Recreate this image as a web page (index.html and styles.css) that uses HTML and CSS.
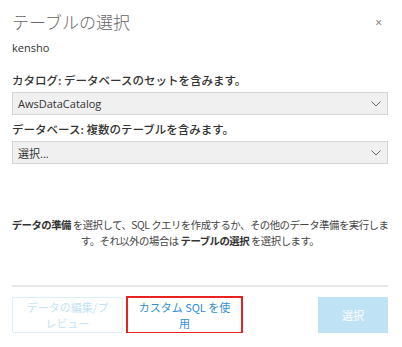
FILE: index.html
```html
<!DOCTYPE html>
<html lang="ja">
<head>
  <meta charset="UTF-8" />
  <title>テーブルの選択</title>
  <link rel="stylesheet" href="styles.css">
</head>
<body>

<div class="dialog">
  <div class="dialog-header">
    <h1>テーブルの選択</h1>
    <span class="close">×</span>
  </div>
  <div class="source-name">kensho</div>

  <label class="field-label">カタログ: データベースのセットを含みます。</label>
  <div class="select-box">
    <span>AwsDataCatalog</span>
    <svg class="chevron" width="10" height="6" viewBox="0 0 10 6"><path d="M0.5 0.5 L5 5 L9.5 0.5" fill="none" stroke="#666" stroke-width="1"/></svg>
  </div>

  <label class="field-label second">データベース: 複数のテーブルを含みます。</label>
  <div class="select-box">
    <span>選択...</span>
    <svg class="chevron" width="10" height="6" viewBox="0 0 10 6"><path d="M0.5 0.5 L5 5 L9.5 0.5" fill="none" stroke="#666" stroke-width="1"/></svg>
  </div>

  <p class="hint"><b>データの準備</b> を選択して、SQL クエリを作成するか、その他のデータ準備を実行しま<br>す。それ以外の場合は <b>テーブルの選択</b> を選択します。</p>

  <div class="divider"></div>

  <div class="actions">
    <button class="btn btn-outline disabled">データの編集/プ<br>レビュー</button>
    <button class="btn btn-outline highlighted">カスタム SQL を使<br>用</button>
    <button class="btn btn-primary">選択</button>
  </div>
</div>

</body>
</html>
```

FILE: styles.css
```css
body {
  margin: 0;
  background: #fff;
  font-family: "Open Sans", "Noto Sans CJK JP", sans-serif;
  color: #333;
}

.dialog {
  padding: 10px 14px 0 12px;
}

.dialog-header {
  display: flex;
  justify-content: space-between;
  align-items: center;
}

.dialog-header h1 {
  margin: 0;
  font-family: "Noto Sans CJK JP", sans-serif;
  font-size: 17px;
  font-weight: 300;
  line-height: 24px;
  color: #666;
}

.close {
  font-size: 12px;
  color: #777;
  margin-right: 6px;
}

.source-name {
  font-size: 11px;
  line-height: 16px;
  margin-top: 6px;
}

.field-label {
  display: block;
  font-family: "Noto Sans CJK JP", sans-serif;
  font-size: 11.5px;
  font-weight: 500;
  line-height: 16px;
  margin-top: 16px;
  color: #333;
}

.field-label.second {
  margin-top: 6px;
}

.select-box {
  display: flex;
  justify-content: space-between;
  align-items: center;
  height: 21px;
  margin-top: 4px;
  padding: 0 6px 0 5px;
  background: #f0f0f0;
  border: 1px solid #d5d5d5;
  font-size: 11px;
  color: #333;
}

.hint {
  margin: 53px -4px 0;
  font-family: "Noto Sans CJK JP", sans-serif;
  font-size: 10.4px;
  letter-spacing: -0.5px;
  line-height: 16px;
  text-align: center;
  white-space: nowrap;
  color: #444;
}

.hint b {
  font-weight: 700;
  color: #333;
}

.divider {
  height: 2px;
  background: #e8e8e8;
  margin-top: 36px;
}

.actions {
  display: flex;
  gap: 4px;
  margin-top: 10px;
}

.btn {
  height: 36px;
  padding: 0 4px;
  font-family: "Noto Sans CJK JP", sans-serif;
  font-size: 11px;
  line-height: 16px;
  border-radius: 0;
  cursor: pointer;
}

.btn-outline {
  width: 112px;
  background: #fff;
  border: 1px solid #cfe8f6;
  color: #2f8fd1;
}

.btn-outline.disabled {
  width: 111px;
  border-color: #dbeffa;
  color: #c3e3f4;
  border-radius: 2px;
}

.btn-outline.highlighted {
  width: 115px;
  border-right-color: #a9d8f2;
  outline: 2px solid #e8231f;
  outline-offset: -1px;
}

.btn-primary {
  margin-left: auto;
  width: 70px;
  background: #bfe3f5;
  border: none;
  color: #fff;
}
```
